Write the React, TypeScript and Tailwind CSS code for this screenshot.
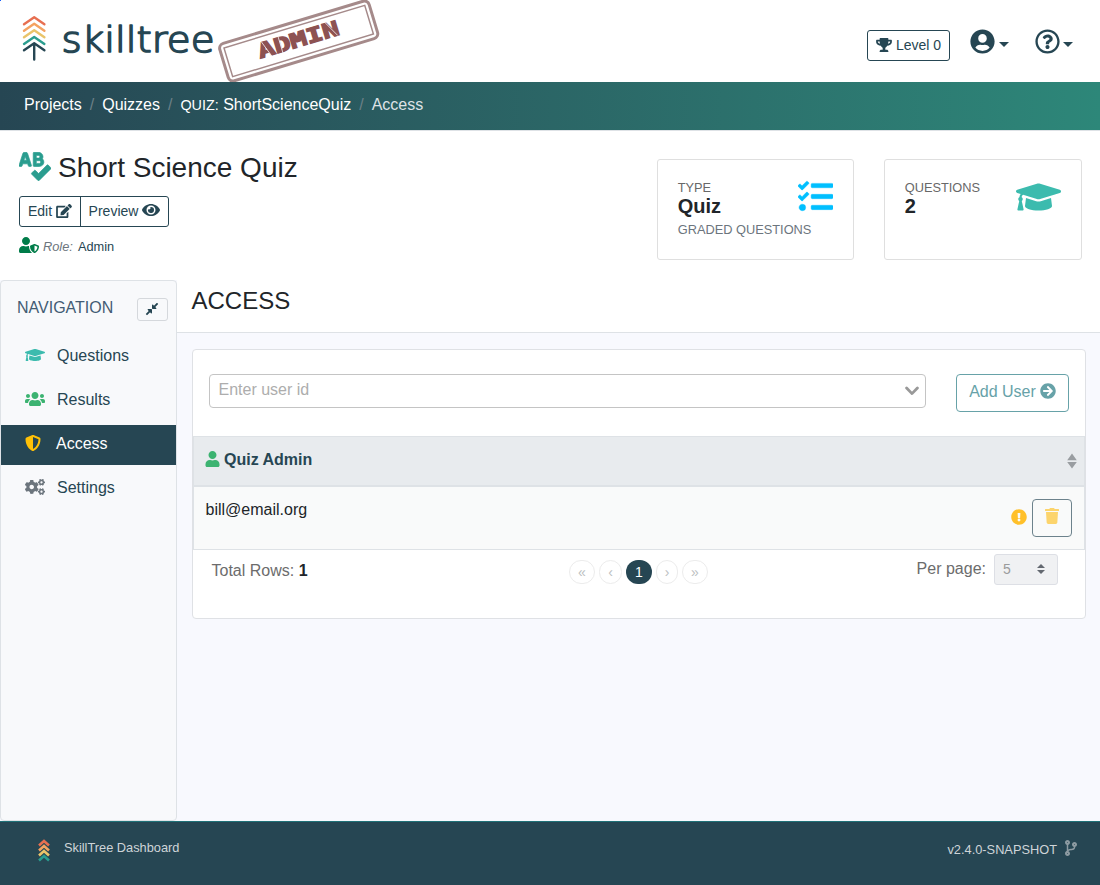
import type { ReactNode } from 'react';
import {
  FaArrowCircleRight,
  FaCodeBranch,
  FaCogs,
  FaCompressAlt,
  FaEdit,
  FaExclamationCircle,
  FaEye,
  FaGraduationCap,
  FaRegQuestionCircle,
  FaShieldAlt,
  FaSpellCheck,
  FaTasks,
  FaTrash,
  FaTrophy,
  FaUser,
  FaUserCircle,
  FaUserShield,
  FaUsers,
} from 'react-icons/fa';

function Caret() {
  return <span className="border-x-[5px] border-t-[5px] border-x-transparent border-t-[#264653]" />;
}

function Logo() {
  return (
    <svg className="h-[82px] w-[390px]" viewBox="0 0 390 82" fill="none">
      <g strokeWidth="2.4" strokeLinecap="round" strokeLinejoin="round">
        <path d="M24 24.2 34.2 17.2 44.4 24.2" stroke="#e76f51" />
        <path d="M24 30.7 34.2 23.7 44.4 30.7" stroke="#f4a261" />
        <path d="M24 37.2 34.2 30.2 44.4 37.2" stroke="#e9c46a" />
        <path d="M24 43.9 34.2 36.9 44.4 43.9" stroke="#2a9d8f" />
        <path d="M24 50.2 34.2 43.2 44.4 50.2M34.2 43.5V59.5" stroke="#264653" />
      </g>
      <text
        x="61.5"
        y="52.3"
        fontFamily="'DejaVu Sans', sans-serif"
        fontWeight="200"
        fontSize="36"
        fill="#264653"
        stroke="#264653"
        strokeWidth="1.6"
        strokeLinejoin="round"
        textLength="153"
        lengthAdjust="spacingAndGlyphs"
      >
        skilltree
      </text>
      <g transform="translate(298.7 41) rotate(-16.8)">
        <rect x="-78" y="-19.5" width="156" height="39" rx="5" stroke="#a58a8a" strokeWidth="3" />
        <rect x="-73.5" y="-15" width="147" height="30" stroke="#a58a8a" strokeWidth="1.5" />
        <text
          x="-42"
          y="5.7"
          fontFamily="'DejaVu Sans Mono', monospace"
          fontWeight="700"
          fontSize="20.5"
          fill="#8d5252"
          stroke="#8d5252"
          strokeWidth="1.3"
          textLength="84"
          lengthAdjust="spacingAndGlyphs"
        >
          ADMIN
        </text>
        <path d="M-36 -10 -30 7M-18.5 -10V7M30.5 -10 39 6" stroke="#fff" strokeWidth="0.7" />
      </g>
    </svg>
  );
}

function Header() {
  return (
    <header className="flex h-[82px] items-start justify-between bg-white">
      <Logo />
      <div className="flex pr-[27px] pt-[30px] text-[#264653]">
        <button className="flex h-[31px] w-[83px] items-center justify-center gap-1 rounded-[3px] border border-[#264653] pb-px text-sm">
          <FaTrophy className="h-[14px] w-4" />
          <span>Level 0</span>
        </button>
        <div className="ml-5 flex w-[39px] items-start justify-between">
          <FaUserCircle className="-mt-px size-[25px]" />
          <span className="mt-3 flex"><Caret /></span>
        </div>
        <div className="ml-[25.5px] flex w-[38.5px] items-start justify-between">
          <FaRegQuestionCircle className="-mt-px size-[25px]" />
          <span className="mt-3 flex"><Caret /></span>
        </div>
      </div>
    </header>
  );
}

function Breadcrumb() {
  const slash = <span className="w-[20.4px] text-center text-[#6c8088]">/</span>;
  return (
    <nav className="flex h-12 items-start bg-linear-to-r from-[#264653] to-[#2d8779] pl-6 pt-[11px] text-base leading-6 text-white">
      <span>Projects</span>
      {slash}
      <span>Quizzes</span>
      {slash}
      <span><span className="text-[14.4px]">QUIZ:</span> ShortScienceQuiz</span>
      {slash}
      <span className="text-[#dee2e6]">Access</span>
    </nav>
  );
}

function StatCard({ label, value, note, icon }: { label: string; value: string; note?: string; icon: ReactNode }) {
  return (
    <div className="flex h-[101px] justify-between rounded-[3px] border border-[#dfdfdf] bg-white pl-[19.7px] pr-5 pt-[18px]">
      <div className="w-20 whitespace-nowrap text-[12.8px] text-[#6c757d]">
        <div className="leading-[19px] text-[#686868]">{label}</div>
        <div className="text-xl font-bold leading-[18px] text-[#212529]">{value}</div>
        {note && <div className="pt-[5px] leading-[19px]">{note}</div>}
      </div>
      {icon}
    </div>
  );
}

function PageHeader() {
  return (
    <section className="flex h-[150px] justify-between border-t border-[#dee2e6] bg-white pl-[19px] pr-[18px]">
      <div>
        <div className="flex pt-[19px]">
          <FaSpellCheck className="mt-0.5 h-[29px] w-8 text-[#2a9d8f]" stroke="currentColor" strokeWidth="12" />
          <h1 className="ml-[7px] text-[28px] leading-[36px] text-[#212529]">Short Science Quiz</h1>
        </div>
        <div className="mt-[10px] flex h-[31px] w-[150px] rounded-[3px] border border-[#264653] text-sm text-[#264653]">
          <button className="flex w-[61px] items-center justify-center gap-1 border-r border-[#264653] pb-px">
            Edit <FaEdit className="h-[14px] w-4" />
          </button>
          <button className="flex flex-1 items-center justify-center gap-1 pb-px">
            Preview <FaEye className="mb-0.5 size-[18px]" />
          </button>
        </div>
        <div className="flex items-center pt-[10px] text-[12.8px] leading-[19px]">
          <FaUserShield className="mb-[3px] h-4 w-5 text-[#007c49]" />
          <i className="ml-1 text-[#6c757d]">Role:</i>
          <span className="ml-[5px] text-[#264653]">Admin</span>
        </div>
      </div>
      <div className="grid grid-cols-[197px_198px] gap-[30px] pt-[28px]">
        <StatCard label="TYPE" value="Quiz" note="GRADED QUESTIONS" icon={<FaTasks className="mt-px size-[35px] shrink-0 text-[#00bfff]" stroke="currentColor" strokeWidth="6" />} />
        <StatCard label="QUESTIONS" value="2" icon={<FaGraduationCap className="mt-px h-[36px] w-[45px] text-[#3cbbae]" />} />
      </div>
    </section>
  );
}

function Sidebar() {
  const icon = 'mb-0.5 mr-3 h-4 w-5';
  const item = 'flex h-10 items-center pl-6 text-base';
  return (
    <aside className="h-[541px] w-[177px] shrink-0 rounded-[4px] border border-[#dee2e6] bg-[#f8f9fb] text-[#264653]">
      <div className="flex h-[55px] items-start justify-between pl-4 pr-2 pt-[17px]">
        <span className="leading-5 text-[#435c74]">NAVIGATION</span>
        <button className="flex h-[23px] w-[31px] items-center justify-center rounded-[3px] border border-[#d5d8dc]">
          <FaCompressAlt className="mb-px mr-px size-[14px]" />
        </button>
      </div>
      <nav className="flex flex-col gap-1">
        <a className={item}><span className="text-[#3cbbae]"><FaGraduationCap className={icon} /></span>Questions</a>
        <a className={item}><span className="text-[#3cb371]"><FaUsers className={icon} /></span>Results</a>
        <a className="mt-px flex h-10 items-center bg-[#264653] pb-[3px] pl-6 text-white"><FaShieldAlt className="mb-px mr-[15px] size-4 text-[#ffc107]" />Access</a>
        <a className="-mt-px flex h-10 items-center pl-6 text-base"><span className="text-[#6c757d]"><FaCogs className={icon} /></span>Settings</a>
      </nav>
    </aside>
  );
}

function AddUserForm() {
  return (
    <div className="flex justify-between px-4 pt-6">
      <div className="flex h-[34px] w-[717px] items-center justify-between rounded-[4px] border border-[#c4c4c4] pl-[8.5px] pr-[6px]">
        <span className="pb-0.5 text-[#adadad]">Enter user id</span>
        <svg className="h-[10px] w-[14px]" viewBox="0 0 14 10" fill="none" stroke="#999" strokeWidth="2.8" strokeLinecap="round" strokeLinejoin="round">
          <path d="m1.6 2 5.4 5.6L12.4 2" />
        </svg>
      </div>
      <button className="flex h-[38px] w-[113px] items-center justify-center gap-1 rounded-[4px] border border-[#67a2a8] pb-[3px] text-[#67a2a8]">
        Add User <FaArrowCircleRight className="mb-px size-4" />
      </button>
    </div>
  );
}

function UserTable() {
  return (
    <div className="mt-6 border-x border-b border-[#dee2e6]">
      <div className="flex h-[51px] justify-between border-b-2 border-t border-[#dee2e6] bg-[#e8ebee] pl-[11px] pr-[7px]">
        <div className="flex items-start gap-1 pt-[11px] font-bold leading-6 text-[#264653]">
          <FaUser className="mt-[3px] h-4 w-[15px] text-[#3cb371]" />
          Quiz Admin
        </div>
        <svg className="mt-4 h-4 w-[10px]" viewBox="0 0 10 16" fill="#999da1">
          <path d="m5 .5 4.8 6.7H.2zM5 15.6.2 8.9h9.6z" />
        </svg>
      </div>
      <div className="flex h-[62px] justify-between bg-[#f9fafa] pl-[11.5px] pr-3 pt-[10px] text-[#212529]">
        <span className="pt-px leading-6">bill@email.org</span>
        <div className="flex items-start pt-0.5">
          <FaExclamationCircle className="mr-[5px] mt-[10px] size-4 text-[#ffc02a]" />
          <button className="flex h-[38px] w-10 items-center justify-center rounded-[4px] border border-[#6c828c] pb-1 pr-px">
            <FaTrash className="h-4 w-[14px] text-[#fcd46c]" />
          </button>
        </div>
      </div>
    </div>
  );
}

function Pagination() {
  return (
    <div className="flex items-start gap-1 pt-[10px] text-sm text-[#bcbfc2]">
      <span className="flex h-6 w-[26px] items-center justify-center rounded-full border border-[#ececec]">«</span>
      <span className="flex h-6 w-[23px] items-center justify-center rounded-full border border-[#ececec]">‹</span>
      <span className="flex h-6 w-[26px] items-center justify-center rounded-full bg-[#264653] text-white">1</span>
      <span className="flex h-6 w-[22px] items-center justify-center rounded-full border border-[#ececec]">›</span>
      <span className="flex h-6 w-[26px] items-center justify-center rounded-full border border-[#ececec]">»</span>
    </div>
  );
}

function TableFooter() {
  return (
    <div className="grid grid-cols-[357.5px_139px_1fr] pl-[18.5px] pr-[27px] text-[#6c6c6c]">
      <span className="pt-[9px] leading-6">Total Rows: <b className="text-[#212529]">1</b></span>
      <Pagination />
      <div className="flex items-start justify-end pt-1">
        <span className="pt-[3px] leading-6">Per page:</span>
        <span className="ml-2 flex h-[31px] w-16 items-center justify-between rounded-[3px] border border-[#dddfe5] bg-[#f0f1f3] pb-px pl-2 pr-3 text-sm text-[#9a9b9c]">
          5
          <svg className="h-[10px] w-2" viewBox="0 0 8 10" fill="#636870">
            <path d="m4 0 4 4H0zM4 10 0 6h8z" />
          </svg>
        </span>
      </div>
    </div>
  );
}

function Footer() {
  return (
    <footer className="flex h-16 items-start justify-between border-t border-[#1f7178] bg-[#264653] pl-[38px] pr-[21px] text-[12.8px] text-[#ced4d8]">
      <div className="flex items-start pt-[17px]">
        <svg className="h-[23px] w-3" viewBox="0 0 12 23" fill="none" strokeWidth="2.6">
          <path d="M1 6.4 6 2l5 4.4" stroke="#e76f51" />
          <path d="m1 11.4 5-4.4 5 4.4" stroke="#f4a261" />
          <path d="m1 16.4 5-4.4 5 4.4" stroke="#e9c46a" />
          <path d="m1 21.4 5-4.4 5 4.4" stroke="#2a9d8f" />
        </svg>
        <span className="ml-[14px] leading-[18px]">SkillTree Dashboard</span>
      </div>
      <div className="flex items-start pt-[18px]">
        <span className="leading-5">v2.4.0-SNAPSHOT</span>
        <FaCodeBranch className="ml-1.5 h-4 w-4 text-[#8d9ba2]" />
      </div>
    </footer>
  );
}

export default function App() {
  return (
    <div className="relative min-h-[885px] w-[1100px] bg-[#f8f9fe] font-['Liberation_Sans',Arial,sans-serif]">
      <span className="absolute left-0 top-0 size-px bg-blue-600" />
      <Header />
      <Breadcrumb />
      <PageHeader />
      <div className="flex">
        <Sidebar />
        <main className="flex-1">
          <h2 className="h-[53px] border-b border-[#dee2e6] bg-white pl-[14.5px] pt-[3px] text-2xl leading-[36px] text-[#212529]">ACCESS</h2>
          <div className="ml-[15px] mr-[14px] mt-4 h-[270px] rounded-[4px] border border-[#dfe1e5] bg-white">
            <AddUserForm />
            <UserTable />
            <TableFooter />
          </div>
        </main>
      </div>
      <Footer />
    </div>
  );
}
